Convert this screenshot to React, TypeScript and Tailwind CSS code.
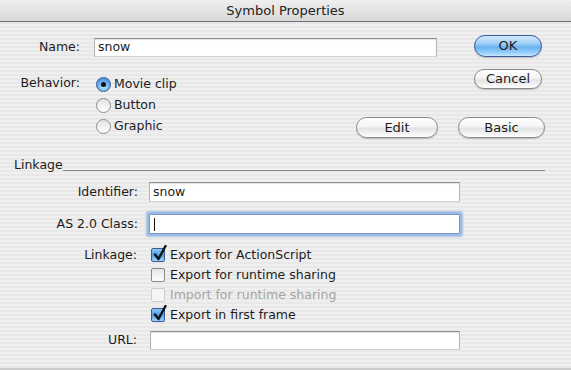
import React from 'react';

const stripes =
  'bg-[repeating-linear-gradient(to_bottom,#efefef_0px,#efefef_2px,#e8e8e8_2px,#e8e8e8_4px)]';

function AquaButton({
  children,
  primary = false,
  className = '',
}: {
  children: React.ReactNode;
  primary?: boolean;
  className?: string;
}) {
  return (
    <div
      className={`flex items-center justify-center rounded-full border text-[13px] shadow-[0_1px_1px_rgba(0,0,0,0.2)] ${
        primary
          ? 'border-[#3b5c9e] bg-[linear-gradient(to_bottom,#d3e9fb_0%,#9dcdf6_40%,#6ab2ef_55%,#8fcbf8_80%,#c3e8fd_100%)]'
          : 'border-[#8a8a8a] bg-[linear-gradient(to_bottom,#ffffff_0%,#f5f5f5_45%,#e3e3e3_55%,#f4f4f4_85%,#ffffff_100%)]'
      } ${className}`}
    >
      {children}
    </div>
  );
}

function Radio({ checked, label }: { checked?: boolean; label: string }) {
  return (
    <div className="flex h-[21px] items-center">
      {checked ? (
        <div className="flex h-[15px] w-[15px] items-center justify-center rounded-full border border-[#3a5a9a] bg-[radial-gradient(circle_at_50%_70%,#b9e2fc_0%,#5aa6ea_60%,#3f7fc9_100%)]">
          <div className="h-[5px] w-[5px] rounded-full bg-[#111]" />
        </div>
      ) : (
        <div className="h-[15px] w-[15px] rounded-full border border-[#8c8c8c] bg-[linear-gradient(to_bottom,#e2e2e2,#ffffff)]" />
      )}
      <span className="ml-[3px]">{label}</span>
    </div>
  );
}

function Checkbox({
  checked,
  disabled,
  label,
}: {
  checked?: boolean;
  disabled?: boolean;
  label: string;
}) {
  return (
    <div className="flex h-[20px] items-center">
      <div
        className={`relative h-[14px] w-[14px] rounded-[2px] border ${
          checked
            ? 'border-[#3a5a9a] bg-[linear-gradient(to_bottom,#8cc6f4,#4f9de6_50%,#9fd6fb)]'
            : disabled
              ? 'border-[#cdcdcd] bg-[#f4f4f4]'
              : 'border-[#8a8a8a] bg-[linear-gradient(to_bottom,#e4e4e4,#ffffff)]'
        }`}
      >
        {checked && (
          <svg
            className="absolute left-[1px] top-[-4px]"
            width="14"
            height="17"
            viewBox="0 0 14 17"
          >
            <path
              d="M2 9.5 L5.5 14 L12.5 1"
              fill="none"
              stroke="#111"
              strokeWidth="2.4"
              strokeLinecap="round"
              strokeLinejoin="round"
            />
          </svg>
        )}
      </div>
      <span className={`ml-[5px] ${disabled ? 'text-[#a4a4a4]' : ''}`}>{label}</span>
    </div>
  );
}

function TextField({ value, className = '' }: { value?: string; className?: string }) {
  return (
    <div
      className={`flex items-center border border-t-[#8d8d8d] border-l-[#b4b4b4] border-r-[#b4b4b4] border-b-[#d2d2d2] bg-white pl-[3px] shadow-[inset_0_1px_1px_rgba(0,0,0,0.12)] ${className}`}
    >
      {value}
    </div>
  );
}

export default function App() {
  return (
    <div
      className={`flex h-[370px] w-[571px] flex-col overflow-hidden ${stripes} font-['DejaVu_Sans',sans-serif] text-[12.5px] text-[#1c1c1c]`}
    >
      {/* Title bar */}
      <div className="flex h-[22px] shrink-0 items-center justify-center rounded-t-[6px] border-b border-[#6f6f6f] bg-[linear-gradient(to_bottom,#efefef,#d8d8d8)] text-[13px] text-[#222]">
        Symbol Properties
      </div>

      {/* Top section */}
      <div className="w-[545px] pt-[13px]">
        <div className="flex items-start">
          <div className="mt-[3px] flex h-[19px] w-[80px] items-center justify-end">Name:</div>
          <TextField value="snow" className="ml-[14px] mt-[3px] h-[19px] w-[343px]" />
          <AquaButton primary className="ml-[37px] h-[22px] w-[68px]">
            OK
          </AquaButton>
        </div>

        <div className="mt-[12px] flex">
          <div className="flex">
            <div className="mt-[4px] flex h-[21px] w-[80px] items-center justify-end">Behavior:</div>
            <div className="ml-[16px] flex flex-col pt-[5px]">
              <Radio checked label="Movie clip" />
              <Radio label="Button" />
              <Radio label="Graphic" />
            </div>
          </div>
          <div className="ml-auto flex w-[189px] flex-col">
            <AquaButton className="mr-[3px] h-[20px] w-[68px] self-end">Cancel</AquaButton>
            <div className="mt-[28px] flex">
              <AquaButton className="h-[21px] w-[82px]">Edit</AquaButton>
              <AquaButton className="ml-[20px] h-[21px] w-[87px]">Basic</AquaButton>
            </div>
          </div>
        </div>

        {/* Linkage separator */}
        <div className="mt-[19px] flex h-[15px] items-end">
          <span className="pl-[14px] leading-[15px]">Linkage</span>
          <div className="mb-[1px] h-px flex-1 bg-[#8a8a8a]" />
        </div>
      </div>

      {/* Linkage section */}
      <div className="mt-[10px] flex flex-col">
        <div className="flex items-center">
          <div className="w-[138px] text-right">Identifier:</div>
          <TextField value="snow" className="ml-[11px] h-[20px] w-[311px]" />
        </div>

        <div className="mt-[12px] flex items-center">
          <div className="w-[138px] text-right">AS 2.0 Class:</div>
          <div className="ml-[11px] flex h-[20px] w-[311px] items-center rounded-[1px] border border-[#7d98c4] bg-white pl-[4px] shadow-[0_0_0_2px_#9bbbe6,0_0_2px_3px_rgba(120,160,215,0.55)]">
            <div className="h-[13px] w-px bg-[#111]" />
          </div>
        </div>

        <div className="mt-[11px] flex">
          <div className="flex h-[20px] w-[137px] items-center justify-end">Linkage:</div>
          <div className="ml-[14px] flex flex-col">
            <Checkbox checked label="Export for ActionScript" />
            <Checkbox label="Export for runtime sharing" />
            <Checkbox disabled label="Import for runtime sharing" />
            <Checkbox checked label="Export in first frame" />
          </div>
        </div>

        <div className="mt-[6px] flex items-center">
          <div className="w-[137px] text-right">URL:</div>
          <TextField className="ml-[13px] h-[19px] w-[310px]" />
        </div>
      </div>

      <div className="mt-auto h-[2px] bg-[#cbcbcb]" />
    </div>
  );
}
